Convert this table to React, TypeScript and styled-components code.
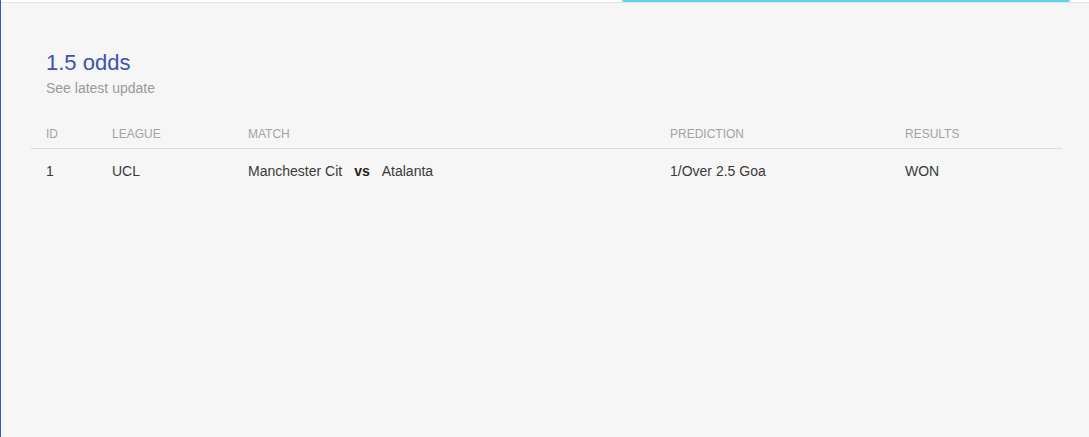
import React from "react";
import styled, { createGlobalStyle } from "styled-components";

const Global = createGlobalStyle`
  html, body { margin: 0; padding: 0; background: #f6f6f6; }
  body { font-family: "Liberation Sans", Arial, sans-serif; }
`;

const Page = styled.div`
  min-height: 437px;
  border-left: 1px solid #3f55c8;
  background: #f6f6f6;
  box-sizing: border-box;
`;

const TopStrip = styled.div`
  display: flex;
  height: 2px;
  background: #ffffff;
  border-bottom: 1px solid #e2e2e2;
`;

const Indicator = styled.div`
  margin-left: 621px;
  width: 448px;
  height: 2px;
  background: #5dd5ef;
  border-radius: 0 0 2px 2px;
`;

const Content = styled.div`
  padding: 0 27px 0 30px;
`;

const Heading = styled.div`
  display: flex;
  flex-direction: column;
  gap: 3px;
  padding: 47px 15px 0;
`;

const Title = styled.h2`
  margin: 0;
  font-size: 22px;
  line-height: 26px;
  font-weight: 400;
  color: #3f51b5;
`;

const Subtitle = styled.p`
  margin: 0;
  font-size: 14px;
  line-height: 18px;
  color: #9a9a9a;
`;

const Table = styled.div`
  margin-top: 21px;
  display: flex;
  flex-direction: column;
`;

const Row = styled.div<{ $head?: boolean }>`
  display: grid;
  grid-template-columns: 66px 136px 422px 235px 1fr;
  height: ${(p) => (p.$head ? "30px" : "44px")};
  align-items: center;
  border-bottom: ${(p) => (p.$head ? "1px solid #dcdcdc" : "none")};
`;

const Cell = styled.div<{ $head?: boolean }>`
  padding: ${(p) => (p.$head ? "2px 0 0 15px" : "0 0 0 15px")};
  font-size: ${(p) => (p.$head ? "12px" : "14px")};
  line-height: 16px;
  color: ${(p) => (p.$head ? "#a3a3a3" : "#3a3a3a")};
  text-transform: ${(p) => (p.$head ? "uppercase" : "none")};
  white-space: nowrap;
`;

const Match = styled.div`
  display: flex;
  align-items: center;
  gap: 12px;
`;

const Vs = styled.b`
  font-weight: 700;
  color: #222;
`;

const headers = ["ID", "League", "Match", "Prediction", "Results"];

export default function App() {
  return (
    <>
      <Global />
      <Page>
        <TopStrip>
          <Indicator />
        </TopStrip>
        <Content>
          <Heading>
            <Title>1.5 odds</Title>
            <Subtitle>See latest update</Subtitle>
          </Heading>
          <Table>
            <Row $head>
              {headers.map((h) => (
                <Cell $head key={h}>
                  {h}
                </Cell>
              ))}
            </Row>
            <Row>
              <Cell>1</Cell>
              <Cell>UCL</Cell>
              <Cell>
                <Match>
                  <span>Manchester Cit</span>
                  <Vs>vs</Vs>
                  <span>Atalanta</span>
                </Match>
              </Cell>
              <Cell>1/Over 2.5 Goa</Cell>
              <Cell>WON</Cell>
            </Row>
          </Table>
        </Content>
      </Page>
    </>
  );
}
